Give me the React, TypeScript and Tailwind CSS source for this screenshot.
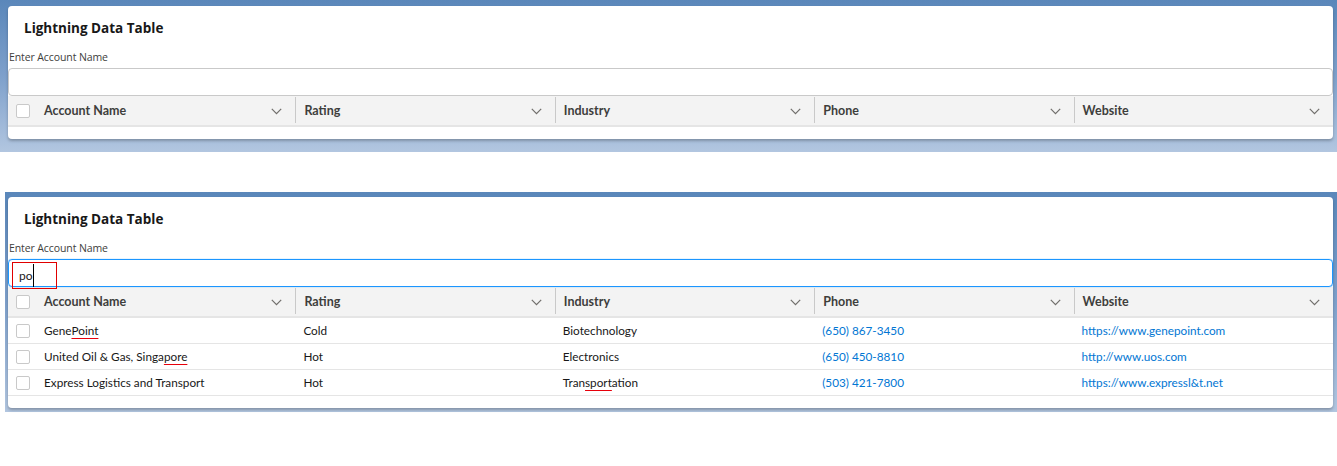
import React from "react";

const font = { fontFamily: '"Open Sans", "Noto Sans", sans-serif' };
const body = { fontFamily: 'Lato, "Noto Sans", sans-serif' };

const columns = ["Account Name", "Rating", "Industry", "Phone", "Website"];

type Row = {
  name: React.ReactNode;
  rating: string;
  industry: React.ReactNode;
  phone: string;
  website: string;
};

// red spell-check mark under part of a word
const Squiggle = ({ children }: { children: React.ReactNode }) => (
  <span className="underline decoration-red-600 underline-offset-[3px]">{children}</span>
);

const rows: Row[] = [
  {
    name: (
      <>
        Gene<Squiggle>Point</Squiggle>
      </>
    ),
    rating: "Cold",
    industry: "Biotechnology",
    phone: "(650) 867-3450",
    website: "https://www.genepoint.com",
  },
  {
    name: (
      <>
        United Oil &amp; Gas, Singa<Squiggle>pore</Squiggle>
      </>
    ),
    rating: "Hot",
    industry: "Electronics",
    phone: "(650) 450-8810",
    website: "http://www.uos.com",
  },
  {
    name: "Express Logistics and Transport",
    rating: "Hot",
    industry: (
      <>
        Tran<Squiggle>sport</Squiggle>ation
      </>
    ),
    phone: "(503) 421-7800",
    website: "https://www.expressl&t.net",
  },
];

function Checkbox() {
  return <div className="w-[14px] h-[14px] rounded-[2px] border border-[#c9c9c9] bg-white" />;
}

function Chevron() {
  return (
    <svg width="11" height="7" viewBox="0 0 11 7" fill="none" className="shrink-0">
      <path d="M0.8 0.8 L5.5 5.6 L10.2 0.8" stroke="#706e6b" strokeWidth="1.2" />
    </svg>
  );
}

function Card({ query, data }: { query?: string; data: Row[] }) {
  const focused = query !== undefined;
  return (
    <div className="w-[1325px] bg-white rounded-[4px] shadow-[0_2px_3px_rgba(0,0,0,0.25)] pb-[12px]" style={font}>
      <div className="h-[44px] flex items-center pl-[16px] text-[13.5px] font-bold text-[#181818]">
        Lightning Data Table
      </div>
      <div className="h-[16px] flex items-center pl-[1px] text-[10.5px] text-[#3e3e3c] tracking-[-0.1px]">
        Enter Account Name
      </div>
      <div
        className={
          "relative mt-[2px] h-[28px] rounded-[4px] border " +
          (focused ? "border-[#1b96ff] shadow-[0_0_1px_#1b96ff]" : "border-[#c9c9c9]")
        }
      >
        {focused && (
          <div
            className="absolute left-[4px] top-[3px] w-[43px] h-[25px] flex items-center pl-[6px] text-[12px] text-[#181818] z-10 outline outline-1 outline-[#e00000]"
            style={body}
          >
            {query}
            <span className="w-px h-[23px] bg-black" />
          </div>
        )}
      </div>
      <div className="grid grid-cols-[28px_repeat(5,1fr)] h-[31px] bg-[#f3f3f3] border-b-2 border-[#e5e5e5]" style={body}>
        <div className="flex items-center pl-[8px] pt-[1px]">
          <Checkbox />
        </div>
        {columns.map((c, i) => (
          <div
            key={c}
            className={
              "flex items-center justify-between pl-[8px] pr-[13px] pt-[2px] text-[12.5px] font-bold text-[#3e3e3c] mt-[1px] mb-[2px] " +
              (i > 0 ? "border-l border-[#c9c9c9]" : "")
            }
          >
            <span>{c}</span>
            <Chevron />
          </div>
        ))}
      </div>
      {data.map((r, i) => (
        <div
          key={i}
          className="grid grid-cols-[28px_repeat(5,1fr)] h-[26px] border-b border-[#e5e5e5] text-[11.75px] text-[#181818]"
          style={body}
        >
          <div className="flex items-center pl-[8px]">
            <Checkbox />
          </div>
          <div className="flex items-center pl-[8px]">{r.name}</div>
          <div className="flex items-center pl-[8px]">{r.rating}</div>
          <div className="flex items-center pl-[8px]">{r.industry}</div>
          <div className="flex items-center pl-[8px] text-[#0176d3]">{r.phone}</div>
          <div className="flex items-center pl-[8px] text-[#0176d3]">{r.website}</div>
        </div>
      ))}
    </div>
  );
}

export default function App() {
  return (
    <div className="w-[1337px] h-[466px] bg-white overflow-hidden">
      <div className="h-[152px] bg-gradient-to-b from-[#5a87ba] via-[#7ea0cb] to-[#b2c6e0] pt-[6px] pl-[8px]">
        <Card data={[]} />
      </div>
      <div className="h-[40px]" />
      <div className="ml-[5px] h-[220px] bg-gradient-to-b from-[#5a87ba] via-[#7ea0cb] to-[#b2c6e0] pt-[5px] pl-[3px]">
        <Card query="po" data={rows} />
      </div>
    </div>
  );
}
